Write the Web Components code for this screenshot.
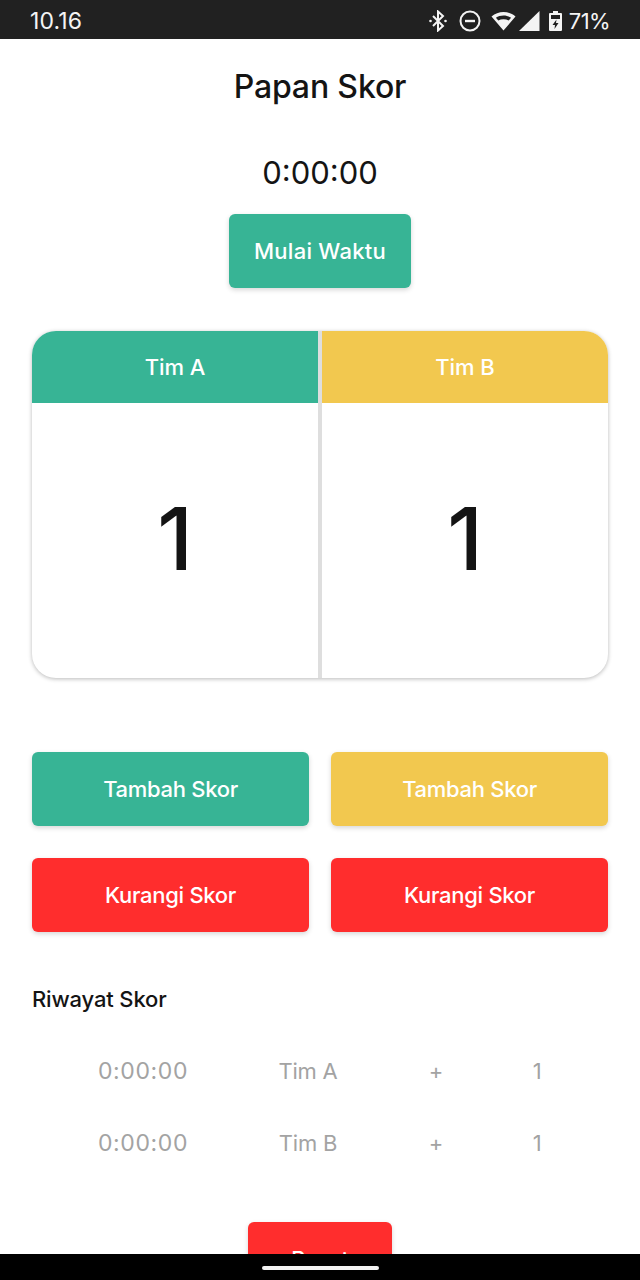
<!DOCTYPE html>
<html lang="id">
<head>
<meta charset="UTF-8">
<title>Papan Skor</title>
<style>
  html, body { margin: 0; height: 1280px; overflow: hidden; background: #fff; }
  body { font-family: Inter, "Liberation Sans", sans-serif; color: #141414; position: relative; }
</style>
</head>
<body>
  <status-bar></status-bar>
  <score-board></score-board>
  <nav-bar></nav-bar>

<script>
  class StatusBar extends HTMLElement {
    connectedCallback() {
      this.attachShadow({mode:'open'}).innerHTML = `
        <style>
          :host { display:flex; align-items:center; height:39px; box-sizing:border-box; padding:2px 30px 0;
                  background:#212121; color:#f4f4f4; font-size:22px; letter-spacing:-.6px; }
          .time { flex:1; font-size:23px; letter-spacing:.1px; }
          .icons { display:flex; align-items:center; }
          svg { display:block; }
        </style>
        <span class="time">10.16</span>
        <div class="icons">
          <svg width="20" height="22" viewBox="0 0 20 22" fill="none" stroke="#f4f4f4" stroke-width="2">
            <path d="M5 6l10 10-5 4.500V1.500l5 4.500L5 16"/>
            <circle cx="2.500" cy="11" r="1.300" fill="#f4f4f4" stroke="none"/>
            <circle cx="17.500" cy="11" r="1.300" fill="#f4f4f4" stroke="none"/>
          </svg>
          <svg style="margin-left:11px" width="22" height="22" viewBox="0 0 22 22" fill="none" stroke="#f4f4f4">
            <circle cx="11" cy="11" r="9.500" stroke-width="2"/>
            <path d="M6 11h10" stroke-width="2.400"/>
          </svg>
          <svg style="margin-left:10px" width="25" height="20" viewBox="0 0 25 20">
            <path fill-rule="evenodd" fill="#f4f4f4" d="M12.500 1C8 1 4 2.600.5 5.500L12.500 19.500 24.500 5.500C21 2.600 17 1 12.500 1zM12.500 4.500c2.800 0 5.500.8 7.600 2.200L17.700 9.500c-1.500-.8-3.300-1.200-5.200-1.200s-3.700.4-5.200 1.200L4.900 6.700c2.100-1.400 4.800-2.200 7.600-2.200z"/>
          </svg>
          <svg style="margin-left:2px" width="22" height="22" viewBox="0 0 22 22">
            <path fill="#f4f4f4" d="M21.500 1v20H1z"/>
          </svg>
          <svg style="margin-left:9px" width="13" height="22" viewBox="0 0 13 22">
            <path fill="#f4f4f4" d="M4 1h5v2h3a1 1 0 0 1 1 1v16a1 1 0 0 1-1 1H1a1 1 0 0 1-1-1V4a1 1 0 0 1 1-1h3z"/>
            <path fill="#212121" d="M2 5h9v4H2zM7.500 9.500L3.500 15h2.500l-.5 4 4-6H7z"/>
          </svg>
          <span style="margin-left:7px">71%</span>
        </div>`;
    }
  }
  customElements.define('status-bar', StatusBar);

  class NavBar extends HTMLElement {
    connectedCallback() {
      this.attachShadow({mode:'open'}).innerHTML = `
        <style>
          :host { position:absolute; left:0; right:0; bottom:0; height:26px; background:#000;
                  display:flex; justify-content:center; padding-top:12px; box-sizing:border-box; }
          i { display:block; width:117px; height:4px; border-radius:2px; background:#f2f2f2; }
        </style>
        <i></i>`;
    }
  }
  customElements.define('nav-bar', NavBar);

  class ScoreButton extends HTMLElement {
    connectedCallback() {
      this.attachShadow({mode:'open'}).innerHTML = `
        <style>
          :host { display:flex; align-items:center; justify-content:center; height:74px; box-sizing:border-box;
                  border-radius:6px; color:#fff; font-size:22px; font-weight:500; letter-spacing:var(--ls, -.3px);
                  background:var(--bg, #37b495); box-shadow:0 2px 5px rgba(0,0,0,.16); }
        </style>
        <slot></slot>`;
    }
  }
  customElements.define('score-button', ScoreButton);

  class TeamColumn extends HTMLElement {
    connectedCallback() {
      this.attachShadow({mode:'open'}).innerHTML = `
        <style>
          :host { display:flex; flex-direction:column; flex:1; min-width:0; }
          .head { height:72px; display:flex; align-items:center; justify-content:center; color:#fff;
                  font-size:22px; font-weight:500; letter-spacing:-.1px; background:var(--bg); }
          .score { flex:1; display:flex; align-items:center; justify-content:center; font-size:86px;
                   font-weight:500; color:#141414; padding-bottom:3px; }
        </style>
        <div class="head"><slot name="name"></slot></div>
        <div class="score"><slot name="score"></slot></div>`;
    }
  }
  customElements.define('team-column', TeamColumn);

  class HistoryRow extends HTMLElement {
    connectedCallback() {
      this.attachShadow({mode:'open'}).innerHTML = `
        <style>
          :host { display:grid; grid-template-columns:222px 108px 148px 54px; height:72px; align-items:center;
                  justify-items:center; font-size:22px; letter-spacing:-.2px; color:#a3a3a3; }
          .time { font-size:23px; letter-spacing:.6px; }
        </style>
        <span class="time">${this.getAttribute('time')}</span>
        <span>${this.getAttribute('team')}</span>
        <span>${this.getAttribute('sign')}</span>
        <span>${this.getAttribute('value')}</span>`;
    }
  }
  customElements.define('history-row', HistoryRow);

  class ScoreBoard extends HTMLElement {
    connectedCallback() {
      this.attachShadow({mode:'open'}).innerHTML = `
        <style>
          :host { display:block; padding:0 32px; }
          h1 { margin:0; padding-top:26px; height:70px; box-sizing:border-box; text-align:center; font-size:32px;
               line-height:44px; font-weight:500; letter-spacing:-.15px; color:#141414; }
          .timer { margin-top:43px; text-align:center; font-size:31px; line-height:42px; letter-spacing:0; color:#141414; }
          .start { width:182px; margin:20px auto 0; --ls:.25px; }
          .card { display:flex; height:347px; margin-top:43px; border-radius:24px; overflow:hidden; background:#fff;
                  box-shadow:0 1px 4px rgba(0,0,0,.28); }
          .line { width:4px; background:#dedede; }
          .actions { display:grid; grid-template-columns:277px 277px; column-gap:22px; row-gap:32px; margin-top:74px; }
          h2 { margin:51px 0 0; font-size:22px; line-height:32px; font-weight:500; letter-spacing:-.15px; color:#141414; }
          .rows { margin-top:20px; }
          .reset { width:144px; margin:43px auto 0; }
        </style>
        <h1>Papan Skor</h1>
        <div class="timer">0:00:00</div>
        <score-button class="start" style="--bg:#37b495">Mulai Waktu</score-button>
        <div class="card">
          <team-column style="--bg:#37b495"><span slot="name">Tim A</span><span slot="score">1</span></team-column>
          <div class="line"></div>
          <team-column style="--bg:#f2c84f"><span slot="name">Tim B</span><span slot="score">1</span></team-column>
        </div>
        <div class="actions">
          <score-button style="--bg:#37b495">Tambah Skor</score-button>
          <score-button style="--bg:#f2c84f">Tambah Skor</score-button>
          <score-button style="--bg:#ff2d2d">Kurangi Skor</score-button>
          <score-button style="--bg:#ff2d2d">Kurangi Skor</score-button>
        </div>
        <h2>Riwayat Skor</h2>
        <div class="rows">
          <history-row time="0:00:00" team="Tim A" sign="+" value="1"></history-row>
          <history-row time="0:00:00" team="Tim B" sign="+" value="1"></history-row>
        </div>
        <score-button class="reset" style="--bg:#ff2d2d">Reset</score-button>`;
    }
  }
  customElements.define('score-board', ScoreBoard);
</script>
</body>
</html>
